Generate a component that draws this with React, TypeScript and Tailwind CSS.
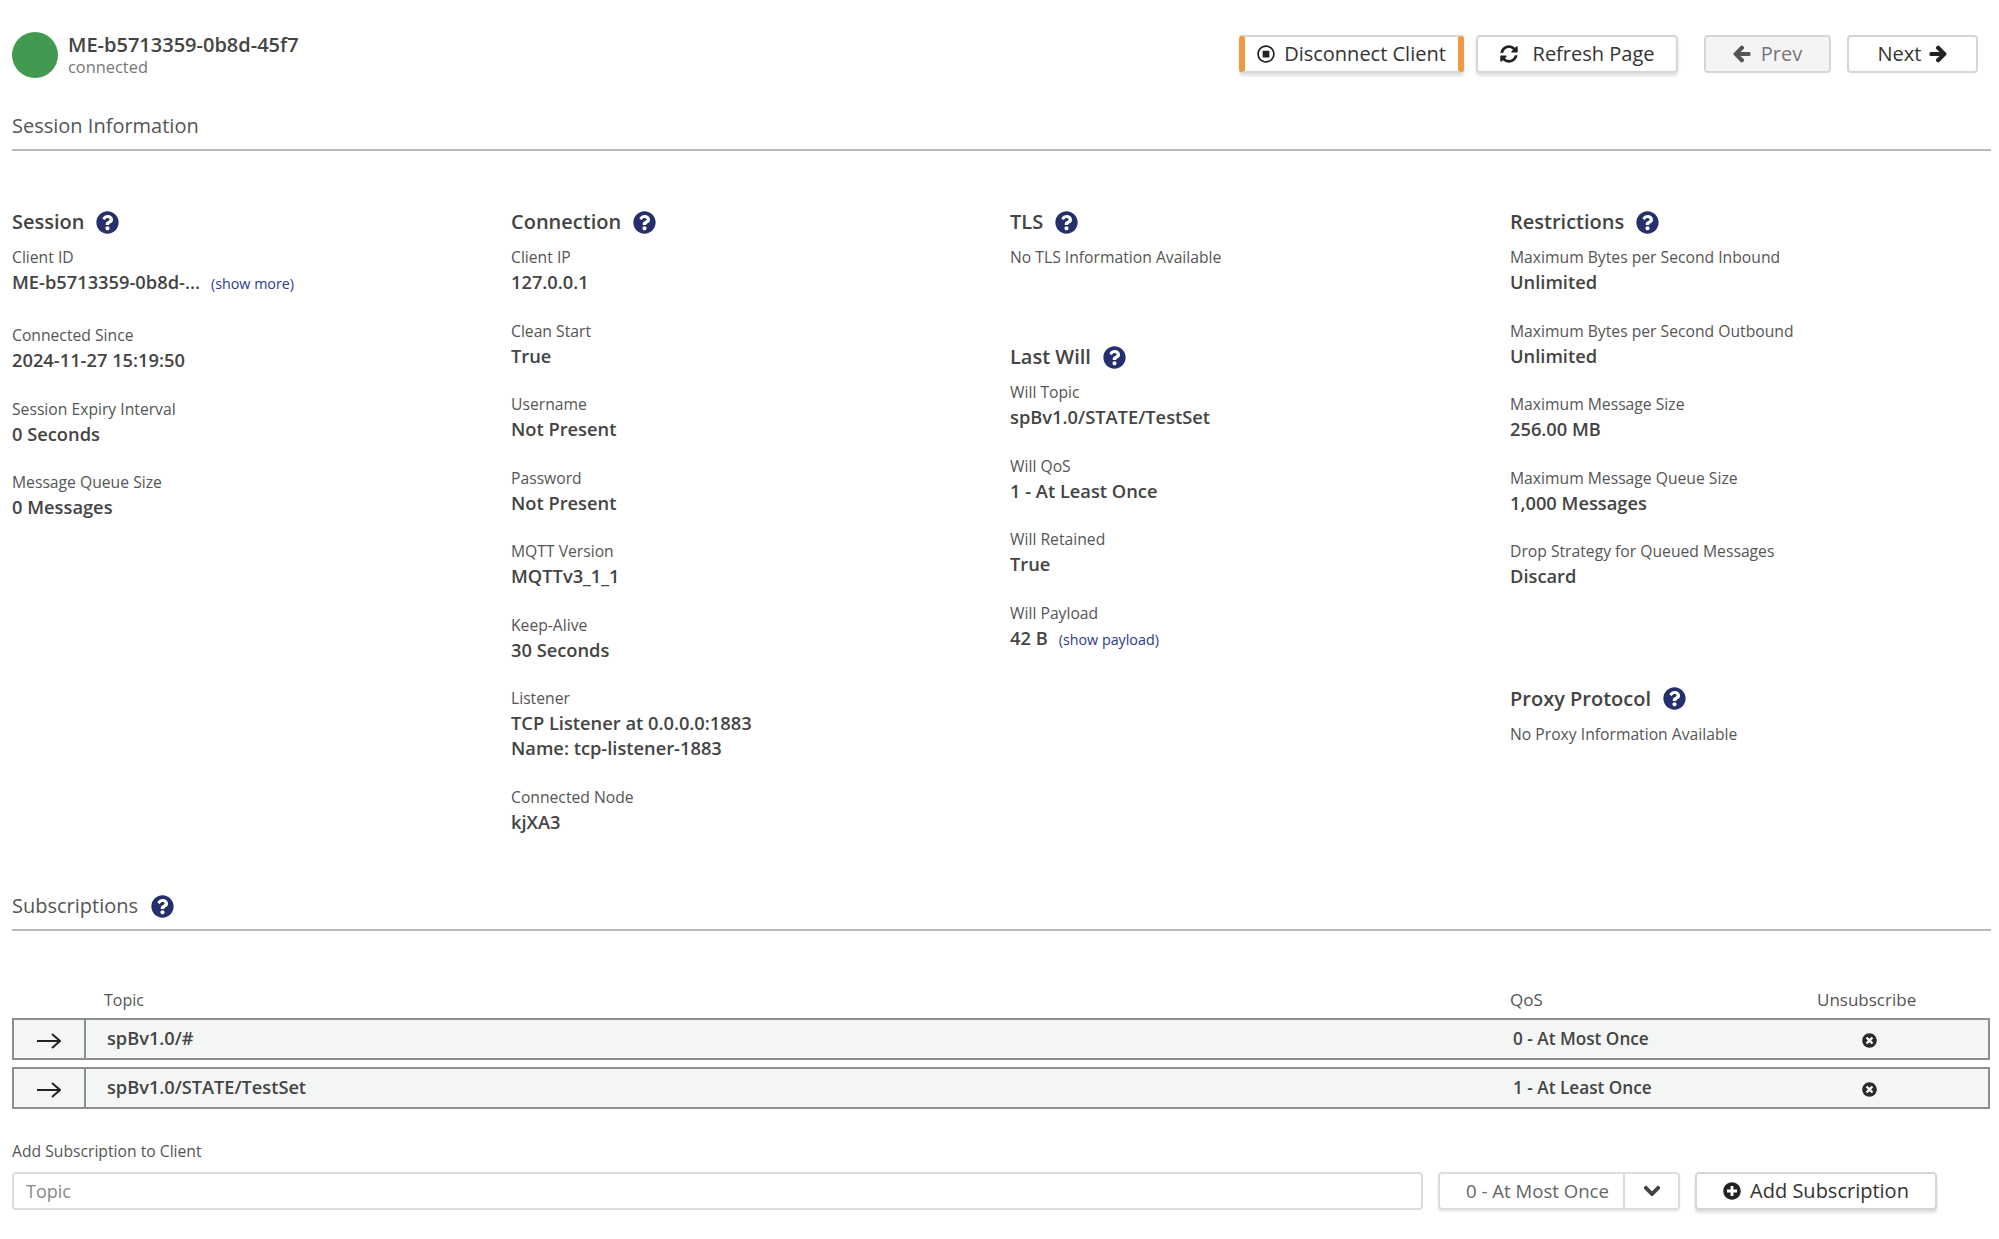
import { ReactNode } from "react";
import {
  FaArrowLeft,
  FaArrowRight,
  FaChevronDown,
  FaPlusCircle,
  FaQuestionCircle,
  FaRegStopCircle,
  FaSyncAlt,
  FaTimesCircle,
} from "react-icons/fa";

function Help() {
  return <FaQuestionCircle className="text-[23px] text-[#262f6e]" />;
}

function Heading({ title }: { title: string }) {
  return (
    <h3 className="flex h-[30px] items-center gap-[12px] text-[20px] font-semibold text-[#444]">
      {title}
      <Help />
    </h3>
  );
}

function Field({ label, children }: { label: string; children: ReactNode }) {
  return (
    <div className="mb-[23.5px]">
      <div className="h-[24px] text-[15.7px] leading-[25px] text-[#555]">{label}</div>
      <div className="pb-[1px] text-[18.3px] leading-[25px] font-semibold text-[#444]">{children}</div>
    </div>
  );
}

function LinkText({ children }: { children: ReactNode }) {
  return <span className="ml-[11px] text-[14.3px] font-normal text-[#2a3a8c]">{children}</span>;
}

function SubscriptionRow({ topic, qos }: { topic: string; qos: string }) {
  return (
    <div className="mr-[1px] flex h-[42px] items-center border-2 border-[#8c8f8f] bg-[#f4f6f6] text-[18.2px] font-semibold text-[#444]">
      <div className="flex h-full w-[72px] items-center justify-center border-r-2 border-[#8c8f8f]">
        <svg width="24" height="18" viewBox="0 0 24 18" className="mt-[3px]" fill="none" stroke="#222" strokeWidth="2">
          <path d="M0 9h22.5M15 2l8 7-8 7" />
        </svg>
      </div>
      <div className="w-[1427px] pl-[21px]">{topic}</div>
      <div className="w-[349px] text-[17.2px]">{qos}</div>
      <FaTimesCircle className="mt-[2px] text-[15px] text-[#2a2a2a]" />
    </div>
  );
}

const btn = "flex h-[38px] items-center justify-center rounded-[4px] border-2 border-[#d6d6d6] text-[20px]";
const raised = "bg-white text-[#333] shadow-[0_3px_3px_rgba(0,0,0,0.12)]";

export default function App() {
  return (
    <div className="h-[1239px] w-[1999px] overflow-hidden bg-white pr-[8px] pl-[12px] font-['Open_Sans',sans-serif]">
      <header className="flex h-[78px] items-start justify-between pt-[32px]">
        <div className="flex items-center gap-[10px]">
          <div className="h-[46px] w-[46px] rounded-full bg-[#419a50]" />
          <div>
            <div className="-mt-[2px] text-[20px] leading-[25px] font-semibold text-[#444]">ME-b5713359-0b8d-45f7</div>
            <div className="mt-[1px] text-[16.4px] leading-[18px] text-[#777]">connected</div>
          </div>
        </div>
        <div className="mt-[2px] mr-[13px] flex pt-[1px]">
          <button className={`${btn} ${raised} w-[225px] gap-[9px] border-x-[6px] border-x-[#ee9a45]`}>
            <FaRegStopCircle className="text-[18px] text-[#222]" />
            Disconnect Client
          </button>
          <button className={`${btn} ${raised} ml-[12px] w-[202px] gap-[15px]`}>
            <FaSyncAlt className="text-[18px] text-[#222]" />
            Refresh Page
          </button>
          <button className={`${btn} ml-[26px] w-[127px] gap-[10px] bg-[#f4f4f4] text-[#777]`}>
            <FaArrowLeft className="stroke-[40px] text-[18px] text-[#555]" />
            Prev
          </button>
          <button className={`${btn} ml-[16px] w-[131px] gap-[8px] bg-white text-[#333]`}>
            Next
            <FaArrowRight className="stroke-[40px] text-[18px] text-[#222]" />
          </button>
        </div>
      </header>

      <div className="flex h-[73px] items-end border-b-2 border-[#b9b9b9] pb-[8px] text-[20px] text-[#555]">
        Session Information
      </div>

      <section className="mt-[56px] grid h-[686px] grid-cols-[499px_499px_500px_480px]">
        <div>
          <Heading title="Session" />
          <div className="h-[8px]" />
          <div className="mb-[26px]">
            <Field label="Client ID">
              ME-b5713359-0b8d-...<LinkText>(show more)</LinkText>
            </Field>
          </div>
          <Field label="Connected Since">2024-11-27 15:19:50</Field>
          <Field label="Session Expiry Interval">0 Seconds</Field>
          <Field label="Message Queue Size">0 Messages</Field>
        </div>

        <div>
          <Heading title="Connection" />
          <div className="h-[8px]" />
          <Field label="Client IP">127.0.0.1</Field>
          <Field label="Clean Start">True</Field>
          <Field label="Username">Not Present</Field>
          <Field label="Password">Not Present</Field>
          <Field label="MQTT Version">MQTTv3_1_1</Field>
          <Field label="Keep-Alive">30 Seconds</Field>
          <Field label="Listener">
            TCP Listener at 0.0.0.0:1883
            <br />
            Name: tcp-listener-1883
          </Field>
          <Field label="Connected Node">kjXA3</Field>
        </div>

        <div>
          <Heading title="TLS" />
          <div className="mt-[8px] h-[25px] text-[15.7px] leading-[25px] text-[#555]">No TLS Information Available</div>
          <div className="h-[72px]" />
          <Heading title="Last Will" />
          <div className="h-[8px]" />
          <Field label="Will Topic">spBv1.0/STATE/TestSet</Field>
          <Field label="Will QoS">1 - At Least Once</Field>
          <Field label="Will Retained">True</Field>
          <Field label="Will Payload">
            42 B<LinkText>(show payload)</LinkText>
          </Field>
        </div>

        <div>
          <Heading title="Restrictions" />
          <div className="h-[8px]" />
          <Field label="Maximum Bytes per Second Inbound">Unlimited</Field>
          <Field label="Maximum Bytes per Second Outbound">Unlimited</Field>
          <Field label="Maximum Message Size">256.00 MB</Field>
          <Field label="Maximum Message Queue Size">1,000 Messages</Field>
          <Field label="Drop Strategy for Queued Messages">Discard</Field>
          <div className="h-[71px]" />
          <Heading title="Proxy Protocol" />
          <div className="mt-[8px] h-[25px] text-[15.7px] leading-[25px] text-[#555]">No Proxy Information Available</div>
        </div>
      </section>

      <div className="flex h-[38px] items-center gap-[13px] border-b-2 border-[#b9b9b9] pb-[10px] text-[20px] text-[#555]">
        Subscriptions
        <Help />
      </div>

      <div className="mt-[50px] flex h-[37px] items-center text-[16px] text-[#555]">
        <div className="w-[1498px] pl-[92px]">Topic</div>
        <div className="w-[307px] text-[17px]">QoS</div>
        <div className="text-[17px]">Unsubscribe</div>
      </div>
      <div className="flex flex-col gap-[7px]">
        <SubscriptionRow topic="spBv1.0/#" qos="0 - At Most Once" />
        <SubscriptionRow topic="spBv1.0/STATE/TestSet" qos="1 - At Least Once" />
      </div>

      <div className="mt-[30px] h-[25px] text-[15.7px] leading-[25px] text-[#555]">Add Subscription to Client</div>
      <div className="mt-[8px] flex items-start">
        <input
          placeholder="Topic"
          className="h-[38px] w-[1411px] rounded-[4px] border-2 border-[#dcdcdc] bg-white pl-[12px] text-[18px] outline-none placeholder:text-[#888]"
        />
        <div className="ml-[15px] flex h-[38px] w-[242px] items-center rounded-[4px] border-2 border-[#dcdcdc] bg-white text-[18.6px] text-[#666] shadow-[0_2px_2px_rgba(0,0,0,0.08)]">
          <div className="flex h-full w-[185px] items-center justify-center border-r-2 border-[#dcdcdc] pl-[12px]">0 - At Most Once</div>
          <div className="flex flex-1 items-center justify-center">
            <FaChevronDown className="stroke-[30px] text-[18px] text-[#444]" />
          </div>
        </div>
        <button className={`${btn} ${raised} ml-[15px] w-[242px] gap-[9px]`}>
          <FaPlusCircle className="text-[18px] text-[#222]" />
          Add Subscription
        </button>
      </div>
    </div>
  );
}
